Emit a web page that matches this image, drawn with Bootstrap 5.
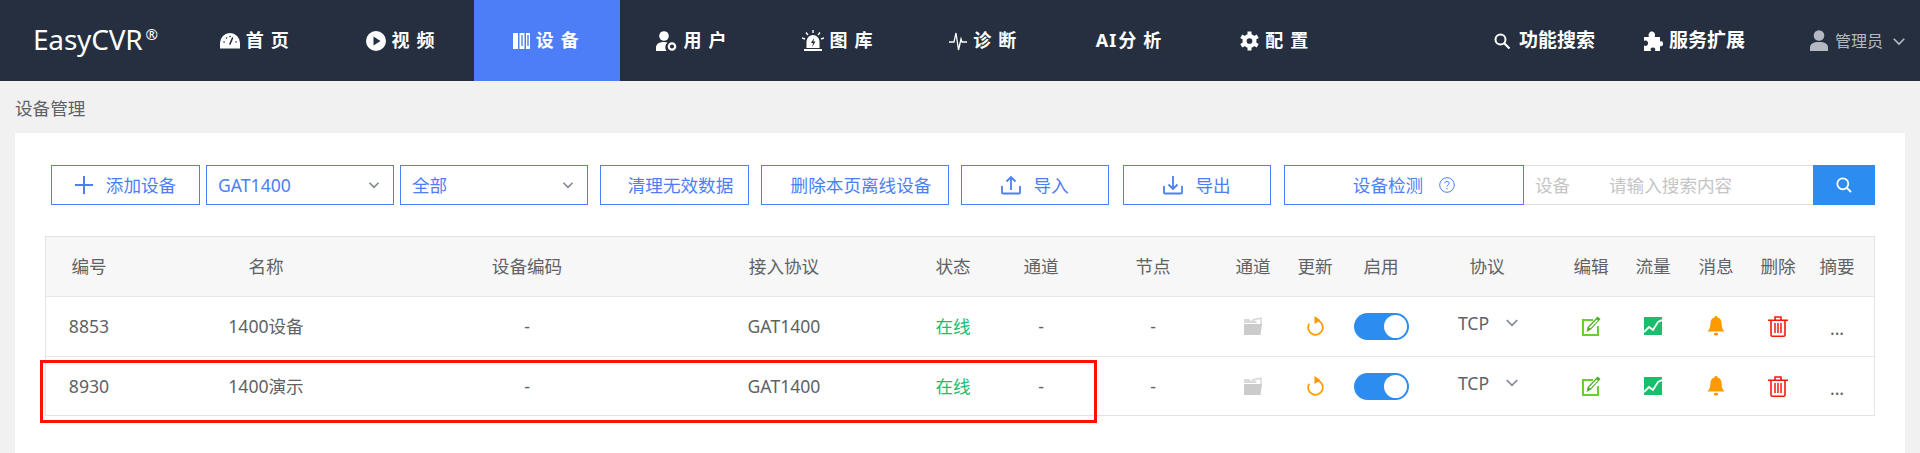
<!DOCTYPE html>
<html lang="zh-CN">
<head>
  <meta charset="UTF-8" />
  <meta name="viewport" content="width=device-width, initial-scale=1" />
  <title>EasyCVR - 设备管理</title>
  <link href="https://cdn.jsdelivr.net/npm/bootstrap@5.3.3/dist/css/bootstrap.min.css" rel="stylesheet" />
  <style>
    body {
      background: #f1f1f1;
      color: #606266;
      font-family: "Noto Sans", "Noto Sans CJK SC", sans-serif;
      font-size: 17.6px;
      height: 453px;
      overflow: hidden;
    }
    .top-nav { background: #262f3f; height: 81px; padding: 0; flex-wrap: nowrap; }
    .top-nav .navbar-brand {
      color: #fff;
      font-size: 28px;
      line-height: 1;
      margin: 0;
      padding: 0 0 4px 33px;
      width: 183px;
      letter-spacing: -.2px;
    }
    .top-nav .navbar-brand sup { font-size: 15px; top: -.65em; margin-left: 3px; }
    .top-nav .nav-link {
      color: #fff;
      font-weight: 700;
      font-size: 18px;
      letter-spacing: 7px;
      width: 145.700px;
      height: 81px;
      padding: 0 0 0 4px;
      display: flex;
      align-items: center;
      justify-content: center;
      gap: 6px;
    }
    .top-nav .nav-link.active { background: #4d7ef7; color: #fff; }
    .top-nav .nav-link svg { flex: none; }
    .tight { letter-spacing: 1px; margin-right: 1px; }
    .nav-extra { color: #fff; font-weight: 700; font-size: 19px; display: flex; align-items: center; gap: 9px; }
    .nav-extra + .nav-extra { margin-left: 48px; gap: 6px; }
    .nav-user { color: #b4b9c1; font-size: 16px; display: flex; align-items: center; gap: 7px; margin-left: 65px; margin-right: 15px; }
    .nav-user svg:last-child { margin-left: 3px; }

    .crumb { height: 52px; padding-left: 15px; line-height: 54px; font-size: 17.6px; color: #606266; }
    .main-card { margin: 0 15px; height: 320px; border: 0; border-radius: 0; padding: 32px 30px 0; }

    .tool-row { height: 40px; }
    .tool-btn, .tool-select {
      height: 40px;
      border: 1.5px solid #4d7ef7;
      border-radius: 0;
      color: #4d7ef7;
      font-size: 17.6px;
      background-color: #fff;
    }
    .tool-btn { padding: 0; display: flex; align-items: center; justify-content: center; }
    .tool-select {
      padding: 0 30px 0 11px;
      background-image: url("data:image/svg+xml,%3csvg xmlns='http://www.w3.org/2000/svg' viewBox='0 0 16 16'%3e%3cpath fill='none' stroke='%23808695' stroke-width='2.2' d='M2 5l6 6 6-6'/%3e%3c/svg%3e");
      background-size: 12px 12px;
      background-position: right 13px center;
    }
    .w-add { width: 149px; margin-left: 6px; gap: 13px; }
    .w-sel { width: 188px; margin-left: 6px; }
    .w-clean { width: 149px; margin-left: 12px; padding-left: 12px; }
    .w-del { width: 188px; margin-left: 12px; padding-left: 12px; }
    .w-io { width: 148px; margin-left: 12px; gap: 12px; }
    .w-io + .w-io { margin-left: 14px; }
    .w-check { width: 240px; margin-left: 13px; gap: 16px; }
    .search-group { width: 351px; flex-wrap: nowrap; }
    .search-group .input-group-text {
      background: #fff;
      border: 1.5px solid #dfdfdf;
      border-left: 0;
      border-right: 0;
      border-radius: 0;
      color: #c5c5c5;
      font-size: 17.6px;
      padding: 0 0 0 11px;
      width: 86px;
      height: 40px;
    }
    .search-group .form-control {
      border: 1.5px solid #dfdfdf;
      border-left: 0;
      border-radius: 0;
      height: 40px;
      padding: 0;
      font-size: 17.6px;
      box-shadow: none;
    }
    .search-group .form-control::placeholder { color: #c5c5c5; }
    .search-go { width: 62px; height: 40px; background: #2d8cf0; border: 0; border-radius: 0; padding: 0; margin: 0; }
    .search-go svg { display: block; margin: 0 auto; }

    .table-box { margin-top: 31px; border: 1px solid #e3e3e3; position: relative; height: 180px; }
    .dev-table { table-layout: fixed; margin: 0; font-size: 17.6px; color: #606266; }
    .dev-table > * > tr > * {
      height: 60px;
      padding: 0;
      text-align: center;
      vertical-align: middle;
      border-bottom: 1px solid #e8e8e8;
      color: #606266;
      font-weight: 400;
      box-shadow: none;
    }
    .dev-table tbody tr:last-child > td { border-bottom: 0; }
    .dev-table > thead > tr > th { background: #f7f7f7; height: 59px; }
    .dev-table > tbody > tr > .state-on { color: #19be6b; }
    .dev-table td svg { display: block; margin: 0 auto; }
    .dots { position: relative; top: 2px; }
    .pill-switch {
      display: block;
      width: 55px;
      height: 27px;
      margin: 0 auto;
      border-radius: 14px;
      background: #2d8cf0;
      position: relative;
    }
    .pill-switch::after {
      content: "";
      position: absolute;
      right: 2px;
      top: 2px;
      width: 23px;
      height: 23px;
      border-radius: 50%;
      background: #fff;
    }
    .proto { display: inline-flex; align-items: center; gap: 17px; position: relative; top: -3px; left: 1px; }
    .proto svg { margin: 0 !important; }
    .mark-box {
      position: absolute;
      left: -6px;
      top: 123px;
      width: 1057px;
      height: 63px;
      border: 3px solid #ff1000;
      pointer-events: none;
    }
  </style>
</head>
<body>

<svg width="0" height="0" class="position-absolute">
  <symbol id="i-folder" viewBox="0 0 20 19">
    <path fill="none" stroke="#d4d4d4" stroke-width="1.4" d="M9 3.5C12 2 15 1.4 18 1.2V7" />
    <path fill="#d9d9d9" d="M1 2h5l2 2h5.5v2H1z" />
    <path fill="#cbcbcb" d="M1 7h18l-1.5 11H1z" />
  </symbol>
  <symbol id="i-refresh" viewBox="0 0 20 20">
    <path fill="none" stroke="#ff9900" stroke-width="1.7" d="M10.5 4.2A7.3 7.3 0 1 1 4.2 7.8" />
    <path fill="#ff9900" d="M9.500 0l6 4.200-6 3.800z" />
  </symbol>
  <symbol id="i-edit" viewBox="0 0 20 20">
    <path fill="none" stroke="#67cf2e" stroke-width="2" d="M12 4H2v15h15V10" />
    <path fill="#4fae27" d="M16.500 0.500l3 2.500-9.500 10.500L5.500 16l1.200-5z" />
    <path fill="#fff" d="M15.600 3.600l1.200 1-7.400 8-1.400-1z" />
  </symbol>
  <symbol id="i-chart" viewBox="0 0 18 18">
    <rect width="18" height="18" fill="#19be6b" />
    <path fill="none" stroke="#fff" stroke-width="1.8" d="M0 15l5-5 4 3 5-8 4-2" />
  </symbol>
  <symbol id="i-bell" viewBox="0 0 20 20">
    <path fill="#ff9900" d="M10 0c1 0 1.600.7 1.600 1.600 2.800.7 4 3 4 6 0 3.600.8 6 3 8H1.400c2.200-2 3-4.400 3-8 0-3 1.200-5.300 4-6C8.400.7 9 0 10 0z" />
    <rect x="8" y="16.700" width="4" height="2.800" rx="1.300" fill="#ff9900" />
  </symbol>
  <symbol id="i-trash" viewBox="0 0 20 21">
    <path fill="none" stroke="#f5180c" stroke-width="1.600" d="M0 4.200h20M7 4V1h6v3M3 4.500V19q0 1.200 1.200 1.200h11.600Q17 20.200 17 19V4.500" />
    <path fill="none" stroke="#f5180c" stroke-width="1.500" d="M7 7v10M10 7v10M13 7v10" />
  </symbol>
</svg>

<nav class="navbar top-nav">
  <a class="navbar-brand" href="#">EasyCVR<sup>®</sup></a>
  <ul class="navbar-nav flex-row">
    <li class="nav-item">
      <a class="nav-link" href="#">
        <svg width="20" height="16" viewBox="0 0 20 16"><path fill="#fff" d="M0 15.500V10a10 10 0 0 1 20 0v5.500z" /><path stroke="#262f3f" stroke-width="1.600" stroke-linecap="round" d="M10 11l2.500-6M4 9h.1M6.500 5h.1M10 3.500h.1M16 9h.1" /></svg>
        首页
      </a>
    </li>
    <li class="nav-item">
      <a class="nav-link" href="#">
        <svg width="20" height="20" viewBox="0 0 20 20"><circle cx="10" cy="10" r="10" fill="#fff" /><path fill="#262f3f" d="M7.500 5.500l7 4.500-7 4.500z" /></svg>
        视频
      </a>
    </li>
    <li class="nav-item">
      <a class="nav-link active" href="#">
        <svg width="17" height="16" viewBox="0 0 17 16"><path fill="#fff" d="M0 0h5v16H0zM6.500 0h5v16h-5zM13 0h4v16h-4z" /><path fill="#4d7ef7" d="M8.300 2h1.400v11H8.300zM14.300 2h1.400v11h-1.400z" /></svg>
        设备
      </a>
    </li>
    <li class="nav-item">
      <a class="nav-link" href="#">
        <svg width="21" height="20" viewBox="0 0 21 20"><circle cx="8" cy="5" r="4.800" fill="#fff" /><path fill="#fff" d="M0 20v-3c0-4 3-6 8-6 1.500 0 2.600.2 3.600.6A6 6 0 0 0 10.500 20z" /><circle cx="16" cy="15.500" r="3.200" fill="none" stroke="#fff" stroke-width="2.200" /></svg>
        用户
      </a>
    </li>
    <li class="nav-item">
      <a class="nav-link" href="#">
        <svg width="22" height="21" viewBox="0 0 22 21"><path fill="#fff" d="M4.500 18v-6.500a6.500 6.500 0 0 1 13 0V18zM2 19h18v2H2z" /><path fill="#262f3f" d="M12 8l-3 5h2l-1 4 3.500-5.500h-2z" /><path stroke="#fff" stroke-width="1.400" d="M11 0v3M4 2.500l2 2.500M18 2.500L16 5M0 8l3 1M22 8l-3 1" /></svg>
        图库
      </a>
    </li>
    <li class="nav-item">
      <a class="nav-link" href="#">
        <svg width="18" height="20" viewBox="0 0 18 20"><path fill="none" stroke="#fff" stroke-width="1.300" d="M0 11h5l2-9 2.500 17L12 8l1 3h5" /></svg>
        诊断
      </a>
    </li>
    <li class="nav-item">
      <a class="nav-link" href="#"><span><span class="tight">AI</span>分析</span></a>
    </li>
    <li class="nav-item">
      <a class="nav-link" href="#">
        <svg width="19" height="20" viewBox="-10 -10 20 20"><circle r="7.400" fill="#fff" /><g stroke="#fff" stroke-width="4.200"><path d="M0-10V10" /><path d="M-8.660-5L8.660 5" /><path d="M-8.660 5L8.660-5" /></g><circle r="3" fill="#262f3f" /></svg>
        配置
      </a>
    </li>
  </ul>
  <div class="d-flex align-items-center ms-auto">
    <div class="nav-extra">
      <svg width="16" height="16" viewBox="0 0 16 16"><circle cx="6.500" cy="6.500" r="5" fill="none" stroke="#fff" stroke-width="2" /><path stroke="#fff" stroke-width="2.200" d="M10 10l5.500 5.500" /></svg>
      功能搜索
    </div>
    <div class="nav-extra">
      <svg width="20" height="20" viewBox="0 0 20 20"><path fill="#fff" d="M1 6h5C4.800 3 6.500.5 8.800.5S13 3 11.600 6H17v4.500c2.500-1 3 .5 3 2.200s-.8 3.200-3 2.300V20h-5c1-2.500-.5-3.500-2.300-3.500S7 17.500 8 20H1v-5.500c2 1 4 0 4-2.300S3 9 1 10z" /></svg>
      服务扩展
    </div>
    <div class="nav-user">
      <svg width="18" height="21" viewBox="0 0 18 21"><circle cx="9" cy="5.500" r="5.300" fill="#b4b9c1" /><path fill="#b4b9c1" d="M0 21v-3.500C0 14 3 12 9 12s9 2 9 5.500V21z" /></svg>
      <span>管理员</span>
      <svg width="12" height="12" viewBox="0 0 16 16"><path fill="none" stroke="#b4b9c1" stroke-width="2.200" d="M1 5l7 7 7-7" /></svg>
    </div>
  </div>
</nav>

<div class="crumb">设备管理</div>

<div class="card main-card">
  <div class="tool-row d-flex align-items-center">
    <button type="button" class="btn tool-btn w-add">
      <svg width="18" height="18" viewBox="0 0 18 18"><path stroke="#4d7ef7" stroke-width="2" d="M9 0v18M0 9h18" /></svg>
      添加设备
    </button>
    <select class="form-select tool-select w-sel"><option>GAT1400</option></select>
    <select class="form-select tool-select w-sel"><option>全部</option></select>
    <button type="button" class="btn tool-btn w-clean">清理无效数据</button>
    <button type="button" class="btn tool-btn w-del">删除本页离线设备</button>
    <button type="button" class="btn tool-btn w-io">
      <svg width="20" height="20" viewBox="0 0 20 20"><path fill="none" stroke="#4d7ef7" stroke-width="1.800" d="M1 11v6.500q0 1 1 1h16q1 0 1-1V11M10 15V2M5.500 6.500L10 2l4.500 4.500" /></svg>
      导入
    </button>
    <button type="button" class="btn tool-btn w-io">
      <svg width="20" height="20" viewBox="0 0 20 20"><path fill="none" stroke="#4d7ef7" stroke-width="1.800" d="M1 11v6.500q0 1 1 1h16q1 0 1-1V11M10 1v13M5.500 9.500L10 14l4.500-4.500" /></svg>
      导出
    </button>
    <button type="button" class="btn tool-btn w-check">
      设备检测
      <svg width="16" height="16" viewBox="0 0 16 16"><circle cx="8" cy="8" r="7.300" fill="none" stroke="#4d7ef7" stroke-width="1" /><path fill="none" stroke="#4d7ef7" d="M5.800 6.200C6 3.500 10.300 3.800 10.200 6.200 10.100 7.800 8 7.700 8 9.800" /><path stroke="#4d7ef7" d="M8 11v1.400" /></svg>
    </button>
    <div class="input-group search-group">
      <span class="input-group-text">设备</span>
      <input type="text" class="form-control" placeholder="请输入搜索内容" />
      <button type="button" class="btn search-go">
        <svg width="16" height="16" viewBox="0 0 16 16"><circle cx="6.800" cy="6.800" r="5.500" fill="none" stroke="#fff" stroke-width="1.800" /><path stroke="#fff" stroke-width="2" d="M10.500 10.500l4.500 4.500" /></svg>
      </button>
    </div>
  </div>

  <div class="table-box">
    <table class="table dev-table">
      <colgroup>
        <col style="width:86px" /><col style="width:268px" /><col style="width:254px" /><col style="width:260px" />
        <col style="width:78px" /><col style="width:98px" /><col style="width:126px" /><col style="width:74px" />
        <col style="width:50px" /><col style="width:82px" /><col style="width:130px" /><col style="width:78px" />
        <col style="width:46px" /><col style="width:80px" /><col style="width:44px" /><col style="width:74px" />
      </colgroup>
      <thead>
        <tr>
          <th>编号</th><th>名称</th><th>设备编码</th><th>接入协议</th><th>状态</th><th>通道</th><th>节点</th><th>通道</th>
          <th>更新</th><th>启用</th><th>协议</th><th>编辑</th><th>流量</th><th>消息</th><th>删除</th><th>摘要</th>
        </tr>
      </thead>
      <tbody>
        <tr>
          <td>8853</td><td>1400设备</td><td>-</td><td>GAT1400</td><td class="state-on">在线</td><td>-</td><td>-</td>
          <td><svg width="20" height="19"><use href="#i-folder" /></svg></td>
          <td><svg width="20" height="20"><use href="#i-refresh" /></svg></td>
          <td><span class="pill-switch"></span></td>
          <td><span class="proto">TCP <svg width="12" height="12" viewBox="0 0 16 16"><path fill="none" stroke="#808695" stroke-width="2.200" d="M1 4l7 7 7-7" /></svg></span></td>
          <td><svg width="20" height="20"><use href="#i-edit" /></svg></td>
          <td><svg width="18" height="18"><use href="#i-chart" /></svg></td>
          <td><svg width="20" height="20"><use href="#i-bell" /></svg></td>
          <td><svg width="20" height="21"><use href="#i-trash" /></svg></td>
          <td><span class="dots">...</span></td>
        </tr>
        <tr>
          <td>8930</td><td>1400演示</td><td>-</td><td>GAT1400</td><td class="state-on">在线</td><td>-</td><td>-</td>
          <td><svg width="20" height="19"><use href="#i-folder" /></svg></td>
          <td><svg width="20" height="20"><use href="#i-refresh" /></svg></td>
          <td><span class="pill-switch"></span></td>
          <td><span class="proto">TCP <svg width="12" height="12" viewBox="0 0 16 16"><path fill="none" stroke="#808695" stroke-width="2.200" d="M1 4l7 7 7-7" /></svg></span></td>
          <td><svg width="20" height="20"><use href="#i-edit" /></svg></td>
          <td><svg width="18" height="18"><use href="#i-chart" /></svg></td>
          <td><svg width="20" height="20"><use href="#i-bell" /></svg></td>
          <td><svg width="20" height="21"><use href="#i-trash" /></svg></td>
          <td><span class="dots">...</span></td>
        </tr>
      </tbody>
    </table>
    <div class="mark-box"></div>
  </div>
</div>

<script src="https://cdn.jsdelivr.net/npm/bootstrap@5.3.3/dist/js/bootstrap.bundle.min.js"></script>
</body>
</html>
